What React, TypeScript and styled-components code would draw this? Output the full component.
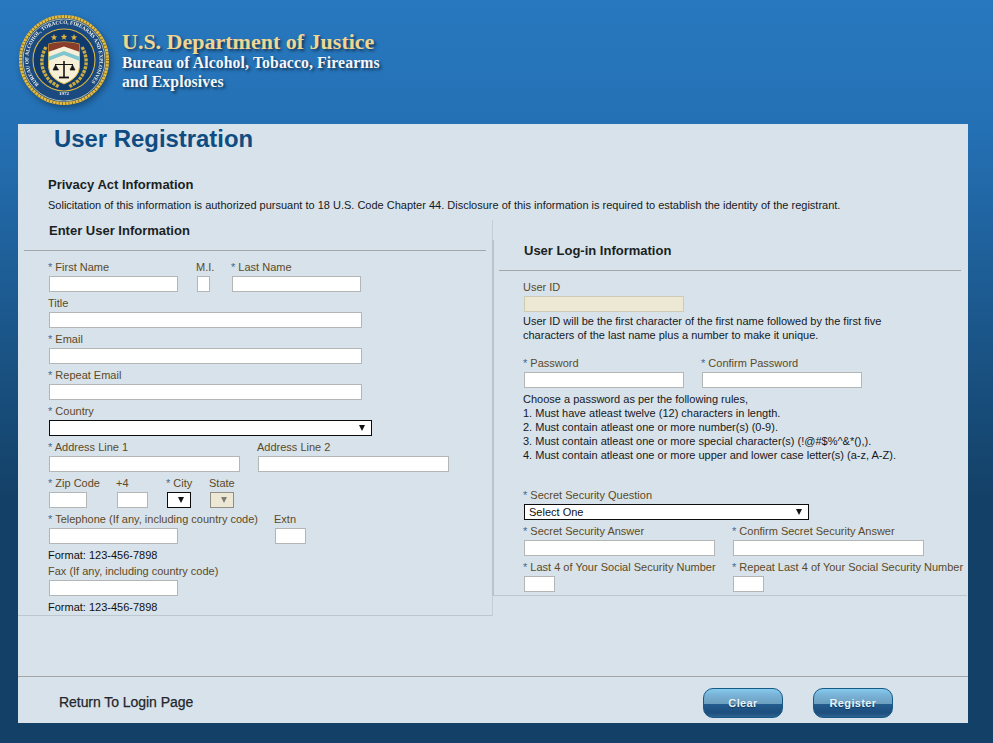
import React from "react";
import styled, { createGlobalStyle } from "styled-components";

const Global = createGlobalStyle`
  html, body { margin: 0; padding: 0; height: 100%; }
  body {
    font-family: "Liberation Sans", Arial, sans-serif;
    background: #134066;
  }
`;

const Page = styled.div`
  width: 993px;
  height: 743px;
  overflow: hidden;
  box-sizing: border-box;
  background: linear-gradient(180deg, #2878bf 0, #2470b4 130px, #134066 500px, #134066 743px);
`;

const Header = styled.header`
  height: 124px;
  display: flex;
  align-items: flex-start;
  box-sizing: border-box;
  padding: 15px 0 0 19px;
`;

const Seal = styled.svg`
  width: 90px;
  height: 90px;
  flex: none;
  filter: drop-shadow(2px 3px 3px rgba(0, 0, 0, 0.35));
`;

const Brand = styled.div`
  margin: 15px 0 0 13px;
  font-family: "Liberation Serif", "Times New Roman", serif;
  font-weight: 700;
  text-shadow: 2px 2px 3px rgba(0, 0, 0, 0.55);
`;

const BrandTitle = styled.div`
  font-size: 22px;
  line-height: 23px;
  color: #efd692;
`;

const BrandSub = styled.div`
  font-size: 15.7px;
  line-height: 19px;
  color: #f4f6f8;
  letter-spacing: 0.13px;
`;

const Panel = styled.main`
  width: 950px;
  height: 599px;
  margin-left: 18px;
  background: #d8e2ea;
  display: flex;
  flex-direction: column;
`;

const Title = styled.h1`
  margin: 0;
  padding-left: 36px;
  font-size: 23.9px;
  line-height: 30px;
  font-weight: 700;
  color: #0f4c81;
`;

const Privacy = styled.section`
  margin-top: 20px;
  padding-left: 30px;
  height: 46px;
`;

const PrivacyHeading = styled.h2`
  margin: 0;
  padding-top: 1px;
  font-size: 13px;
  line-height: 20px;
  font-weight: 700;
  color: #1a1f24;
`;

const Body = styled.p`
  margin: 0;
  font-size: 11px;
  line-height: 20px;
  color: #16191c;
  white-space: nowrap;
`;

const Columns = styled.div`
  display: flex;
  align-items: flex-start;
`;

const LeftColumn = styled.section`
  width: 475px;
  box-sizing: border-box;
  border-right: 1px solid #c3ced6;
  border-bottom: 1px solid #bcc7cf;
  padding-bottom: 3px;
`;

const RightColumn = styled.section`
  width: 475px;
  margin-top: 20px;
  box-sizing: border-box;
  border-left: 2px solid #b8c3cc;
  border-bottom: 1px solid #bcc7cf;
  margin-left: -1px;
  padding-bottom: 3px;
`;

const SectionHeading = styled.h3<{ $inset: number; $text: number }>`
  margin: 0 6px 0 ${(p) => p.$inset}px;
  height: 31px;
  box-sizing: border-box;
  padding: 1px 0 0 ${(p) => p.$text}px;
  font-size: 13px;
  line-height: 20px;
  font-weight: 700;
  color: #1a1f24;
  border-bottom: 1px solid #a3a7a8;
`;

const FormBody = styled.div<{ $left: number }>`
  padding: 5px 0 0 ${(p) => p.$left}px;
`;

const Row = styled.div`
  display: flex;
`;

const Field = styled.div<{ $w?: number }>`
  width: ${(p) => (p.$w ? `${p.$w}px` : "auto")};
  flex: none;
`;

const Label = styled.label`
  display: block;
  height: 20px;
  box-sizing: border-box;
  padding-top: 2px;
  font-size: 11px;
  line-height: 18px;
  color: #5b4a28;
  white-space: nowrap;
`;

const Req = styled.span`
  color: #3f6a8e;
`;

const Input = styled.input<{ $w: number; $locked?: boolean }>`
  display: block;
  width: ${(p) => p.$w}px;
  height: 16px;
  margin: 0 0 0 1px;
  padding: 0;
  box-sizing: border-box;
  border: 1px solid ${(p) => (p.$locked ? "#cfcbb2" : "#b4b6b6")};
  background: ${(p) => (p.$locked ? "#ece8d4" : "#ffffff")};
  outline: none;
`;

const SelectBox = styled.div<{ $w: number; $disabled?: boolean }>`
  width: ${(p) => p.$w}px;
  height: 16px;
  margin-left: 1px;
  box-sizing: border-box;
  border: 1px solid ${(p) => (p.$disabled ? "#8e8e84" : "#0c0c0c")};
  background: ${(p) => (p.$disabled ? "#ece8d4" : "#ffffff")};
  display: flex;
  align-items: center;
  justify-content: space-between;
  padding: 0 6px 0 4px;
  font-size: 11px;
  line-height: 14px;
  color: #111;
`;

const Arrow = styled.span<{ $disabled?: boolean }>`
  flex: none;
  margin-left: auto;
  width: 0;
  height: 0;
  border-left: 3.5px solid transparent;
  border-right: 3.5px solid transparent;
  border-top: 6px solid ${(p) => (p.$disabled ? "#7d7d78" : "#111")};
`;

const FormatLine = styled.div`
  margin-top: 4px;
  height: 12px;
  font-size: 11px;
  line-height: 14px;
  color: #111;
`;

const Note = styled.div<{ $top: number }>`
  margin-top: ${(p) => p.$top}px;
  font-size: 11px;
  line-height: 14px;
  color: #16191c;
  white-space: nowrap;
`;

const Spaced = styled.div<{ $top: number }>`
  margin-top: ${(p) => p.$top}px;
`;

const Footer = styled.footer`
  margin-top: auto;
  height: 47px;
  box-sizing: border-box;
  border-top: 1px solid #a3a7a8;
  display: flex;
  align-items: flex-start;
  padding: 11px 0 0 41px;
`;

const BackLink = styled.a`
  font-size: 14px;
  line-height: 28px;
  font-weight: 400;
  letter-spacing: -0.05px;
  color: #22262a;
  -webkit-text-stroke: 0.25px #22262a;
  width: 644px;
  flex: none;
`;

const GlossButton = styled.button`
  width: 80px;
  height: 30px;
  margin-right: 30px;
  padding: 0;
  border: 1px solid #175a86;
  border-radius: 10px;
  background: linear-gradient(
    180deg,
    #86cbee 0,
    #79b4d8 20%,
    #6d9fbf 53%,
    #245c8e 54%,
    #1c4e7e 85%,
    #2f6391 100%
  );
  font-family: "Liberation Sans", Arial, sans-serif;
  font-size: 11px;
  font-weight: 700;
  letter-spacing: 0.35px;
  color: #e6f4fb;
  text-shadow: 0 1px 1px rgba(0, 30, 60, 0.5);
`;

const star = (cx: number, cy: number, r: number) => {
  const pts: string[] = [];
  for (let i = 0; i < 10; i++) {
    const rad = i % 2 === 0 ? r : r * 0.42;
    const a = (Math.PI / 5) * i - Math.PI / 2;
    pts.push(`${(cx + rad * Math.cos(a)).toFixed(2)},${(cy + rad * Math.sin(a)).toFixed(2)}`);
  }
  return pts.join(" ");
};

const SealMark = () => (
  <Seal viewBox="0 0 90 90" aria-label="ATF seal">
    <defs>
      <path id="ringText" d="M 20 69.5 A 35.5 35.5 0 1 1 70 69.5" />
      <clipPath id="shieldClip">
        <path d="M29.5 29 Q45 25 60.5 29 V52 Q60 63 45 69 Q30 63 29.5 52 Z" />
      </clipPath>
    </defs>
    <circle cx="45" cy="45" r="43.5" fill="#1a4a80" stroke="#e2bd45" strokeWidth="3" />
    <circle cx="45" cy="45" r="43.5" fill="none" stroke="#8a6a1c" strokeWidth="3" strokeDasharray="0.9 2.4" />
    <circle cx="45" cy="45" r="41" fill="none" stroke="#f0e6b8" strokeWidth="0.7" />
    <text fontFamily="'Liberation Serif', serif" fontSize="5.2" fontWeight="700" fill="#f2f2ea">
      <textPath href="#ringText" textLength="164" lengthAdjust="spacing">
        BUREAU OF ALCOHOL, TOBACCO, FIREARMS AND EXPLOSIVES
      </textPath>
    </text>
    <text x="45" y="80" textAnchor="middle" fontFamily="'Liberation Serif', serif" fontSize="5" fontWeight="700" fill="#f2f2ea">
      1972
    </text>
    <circle cx="45" cy="45" r="31" fill="#113a6c" stroke="#d8b544" strokeWidth="1.1" />
    <polygon points={star(35, 22.5, 3.4)} fill="#dcb23c" />
    <polygon points={star(45, 22, 3.4)} fill="#dcb23c" />
    <polygon points={star(55, 22.5, 3.4)} fill="#dcb23c" />
    <path d="M27 32 Q17 50 31 66 L40 72" fill="none" stroke="#c9ab42" strokeWidth="3.4" strokeDasharray="3 1" />
    <path d="M63 32 Q73 50 59 66 L50 72" fill="none" stroke="#c9ab42" strokeWidth="3.4" strokeDasharray="3 1" />
    <path d="M29.5 29 Q45 25 60.5 29 V52 Q60 63 45 69 Q30 63 29.5 52 Z" fill="#f7efd8" stroke="#d8b544" strokeWidth="1" />
    <g clipPath="url(#shieldClip)">
      <path d="M29 25 H61 V37 L45 31.5 L29 37 Z" fill="#8a3e2a" />
      <path d="M29 42 L45 36 L61 42 V46 L45 40 L29 46 Z" fill="#7fc6cf" />
    </g>
    <g stroke="#141414" fill="none" strokeWidth="1">
      <path d="M45 46 V62" strokeWidth="1.6" />
      <path d="M40 62.5 H50" strokeWidth="1.8" />
      <path d="M36 49.5 H54" />
      <path d="M36.5 50 L34 55 H39.5 Z M53.5 50 L51 55 H56 Z" strokeWidth="0.7" fill="#141414" />
    </g>
  </Seal>
);

const Req_ = () => <Req>* </Req>;

export default function App() {
  return (
    <Page>
      <Global />
      <Header>
        <SealMark />
        <Brand>
          <BrandTitle>U.S. Department of Justice</BrandTitle>
          <BrandSub>Bureau of Alcohol, Tobacco, Firearms</BrandSub>
          <BrandSub>and Explosives</BrandSub>
        </Brand>
      </Header>
      <Panel>
        <Title>User Registration</Title>
        <Privacy>
          <PrivacyHeading>Privacy Act Information</PrivacyHeading>
          <Body>
            Solicitation of this information is authorized pursuant to 18 U.S. Code Chapter 44. Disclosure of this
            information is required to establish the identity of the registrant.
          </Body>
        </Privacy>
        <Columns>
          <LeftColumn>
            <SectionHeading $inset={6} $text={25}>Enter User Information</SectionHeading>
            <FormBody $left={30}>
              <Row>
                <Field $w={148}><Label><Req_ />First Name</Label><Input $w={129} /></Field>
                <Field $w={35}><Label>M.I.</Label><Input $w={13} /></Field>
                <Field><Label><Req_ />Last Name</Label><Input $w={129} /></Field>
              </Row>
              <Field><Label>Title</Label><Input $w={313} /></Field>
              <Field><Label><Req_ />Email</Label><Input $w={313} /></Field>
              <Field><Label><Req_ />Repeat Email</Label><Input $w={313} /></Field>
              <Field><Label><Req_ />Country</Label><SelectBox $w={323}><Arrow /></SelectBox></Field>
              <Row>
                <Field $w={209}><Label><Req_ />Address Line 1</Label><Input $w={191} /></Field>
                <Field><Label>Address Line 2</Label><Input $w={191} /></Field>
              </Row>
              <Row>
                <Field $w={68}><Label><Req_ />Zip Code</Label><Input $w={38} /></Field>
                <Field $w={50}><Label>+4</Label><Input $w={31} /></Field>
                <Field $w={43}><Label><Req_ />City</Label><SelectBox $w={24}><Arrow /></SelectBox></Field>
                <Field><Label>State</Label><SelectBox $w={24} $disabled><Arrow $disabled /></SelectBox></Field>
              </Row>
              <Row>
                <Field $w={226}><Label><Req_ />Telephone (If any, including country code)</Label><Input $w={129} /></Field>
                <Field><Label>Extn</Label><Input $w={31} /></Field>
              </Row>
              <FormatLine>Format: 123-456-7898</FormatLine>
              <Field><Label>Fax (If any, including country code)</Label><Input $w={129} /></Field>
              <FormatLine>Format: 123-456-7898</FormatLine>
            </FormBody>
          </LeftColumn>
          <RightColumn>
            <SectionHeading $inset={5} $text={25}>User Log-in Information</SectionHeading>
            <FormBody $left={29}>
              <Field><Label>User ID</Label><Input $w={160} $locked readOnly /></Field>
              <Note $top={2}>
                User ID will be the first character of the first name followed by the first five<br />
                characters of the last name plus a number to make it unique.
              </Note>
              <Spaced $top={10}>
                <Row>
                  <Field $w={178}><Label><Req_ />Password</Label><Input $w={160} /></Field>
                  <Field><Label><Req_ />Confirm Password</Label><Input $w={160} /></Field>
                </Row>
              </Spaced>
              <Note $top={4}>
                Choose a password as per the following rules,<br />
                1. Must have atleast twelve (12) characters in length.<br />
                2. Must contain atleast one or more number(s) (0-9).<br />
                3. Must contain atleast one or more special character(s) (!@#$%^&amp;*(),).<br />
                4. Must contain atleast one or more upper and lower case letter(s) (a-z, A-Z).
              </Note>
              <Spaced $top={22}>
                <Field>
                  <Label><Req_ />Secret Security Question</Label>
                  <SelectBox $w={285}>Select One<Arrow /></SelectBox>
                </Field>
              </Spaced>
              <Row>
                <Field $w={209}><Label><Req_ />Secret Security Answer</Label><Input $w={191} /></Field>
                <Field><Label><Req_ />Confirm Secret Security Answer</Label><Input $w={191} /></Field>
              </Row>
              <Row>
                <Field $w={209}><Label><Req_ />Last 4 of Your Social Security Number</Label><Input $w={31} /></Field>
                <Field><Label><Req_ />Repeat Last 4 of Your Social Security Number</Label><Input $w={31} /></Field>
              </Row>
            </FormBody>
          </RightColumn>
        </Columns>
        <Footer>
          <BackLink>Return To Login Page</BackLink>
          <GlossButton type="button">Clear</GlossButton>
          <GlossButton type="button">Register</GlossButton>
        </Footer>
      </Panel>
    </Page>
  );
}
